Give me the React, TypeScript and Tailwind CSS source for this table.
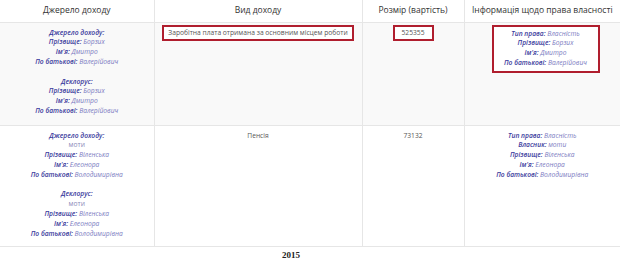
import React from 'react';

type Line = { label?: string; value?: string };

function Field({ label, value }: Line) {
  return (
    <div className="leading-[9.8px] whitespace-nowrap">
      {label && <span className="font-semibold italic text-[#3a3a9c]">{label}:</span>}
      {value && <span className={label ? 'italic text-[#7c7cc2]' : 'text-[#8a8ab8]'}>{label ? ' ' : ''}{value}</span>}
    </div>
  );
}

function Block({ lines }: { lines: Line[] }) {
  return (
    <div>
      {lines.map((l, i) => (
        <Field key={i} {...l} />
      ))}
    </div>
  );
}

const rows = [
  {
    source: [
      [
        { label: 'Джерело доходу' },
        { label: 'Прізвище', value: 'Борзих' },
        { label: "Ім'я", value: 'Дмитро' },
        { label: 'По батькові', value: 'Валерійович' },
      ],
      [
        { label: 'Деклорус' },
        { label: 'Прізвище', value: 'Борзих' },
        { label: "Ім'я", value: 'Дмитро' },
        { label: 'По батькові', value: 'Валерійович' },
      ],
    ],
    kind: 'Заробітна плата отримана за основним місцем роботи',
    amount: '525355',
    rights: [
      { label: 'Тип права', value: 'Власність' },
      { label: 'Прізвище', value: 'Борзих' },
      { label: "Ім'я", value: 'Дмитро' },
      { label: 'По батькові', value: 'Валерійович' },
    ],
    marked: true,
  },
  {
    source: [
      [
        { label: 'Джерело доходу' },
        { value: 'моти' },
        { label: 'Прізвище', value: 'Віленська' },
        { label: "Ім'я", value: 'Елеонора' },
        { label: 'По батькові', value: 'Володимирівна' },
      ],
      [
        { label: 'Деклорус' },
        { value: 'моти' },
        { label: 'Прізвище', value: 'Віленська' },
        { label: "Ім'я", value: 'Елеонора' },
        { label: 'По батькові', value: 'Володимирівна' },
      ],
    ],
    kind: 'Пенсія',
    amount: '73132',
    rights: [
      { label: 'Тип права', value: 'Власність' },
      { label: 'Власник', value: 'моти' },
      { label: 'Прізвище', value: 'Віленська' },
      { label: "Ім'я", value: 'Елеонора' },
      { label: 'По батькові', value: 'Володимирівна' },
    ],
    marked: false,
  },
];

export default function App() {
  return (
    <div className="w-[620px] h-[265px] bg-white font-['Open_Sans',sans-serif] overflow-hidden">
      <table className="w-[620px] border-collapse table-fixed">
        <colgroup>
          <col className="w-[154px]" />
          <col className="w-[208px]" />
          <col className="w-[102px]" />
          <col className="w-[156px]" />
        </colgroup>
        <thead>
          <tr className="h-[22px] text-[8.5px] text-[#333]">
            <th className="font-normal border-r border-b border-[#e6e6e6] text-center align-middle">Джерело доходу</th>
            <th className="font-normal border-r border-b border-[#e6e6e6] text-center align-middle">Вид доходу</th>
            <th className="font-normal border-r border-b border-[#e6e6e6] text-center align-middle">Розмір (вартість)</th>
            <th className="font-normal border-b border-[#e6e6e6] text-center align-middle">Інформація щодо права власності</th>
          </tr>
        </thead>
        <tbody className="text-[6.7px]">
          {rows.map((r, i) => (
            <tr key={i} className={i === 0 ? 'h-[103px] bg-[#f9f9f9]' : 'h-[121px] bg-white'}>
              <td className="border-r border-b border-[#e6e6e6] text-center align-top pt-[5px]">
                <div className="flex flex-col gap-[10px]">
                  {r.source.map((b, j) => (
                    <Block key={j} lines={b} />
                  ))}
                </div>
              </td>
              <td className="border-r border-b border-[#e6e6e6] text-center align-top text-[#555]">
                {r.marked ? (
                  <div className="mt-[2px] inline-block border-2 border-[#b01e2e] bg-white px-[4px] leading-[12px] whitespace-nowrap">{r.kind}</div>
                ) : (
                  <div className="pt-[5px] leading-[9.8px]">{r.kind}</div>
                )}
              </td>
              <td className="border-r border-b border-[#e6e6e6] text-center align-top text-[#555]">
                {r.marked ? (
                  <div className="mt-[2px] inline-block w-[41px] border-2 border-[#b01e2e] bg-white leading-[12px]">{r.amount}</div>
                ) : (
                  <div className="pt-[5px] leading-[9.8px]">{r.amount}</div>
                )}
              </td>
              <td className="border-b border-[#e6e6e6] text-center align-top">
                {r.marked ? (
                  <div className="mt-[2px] ml-[27px] w-[108px] border-2 border-[#b01e2e] bg-white pt-[2px] pb-[3px]">
                    <Block lines={r.rights} />
                  </div>
                ) : (
                  <div className="pt-[5px]">
                    <Block lines={r.rights} />
                  </div>
                )}
              </td>
            </tr>
          ))}
        </tbody>
      </table>
      <div className="flex justify-center pt-[2px] pr-[38px] font-['Liberation_Serif',serif] font-bold text-[9px] text-[#222]">2015</div>
    </div>
  );
}
